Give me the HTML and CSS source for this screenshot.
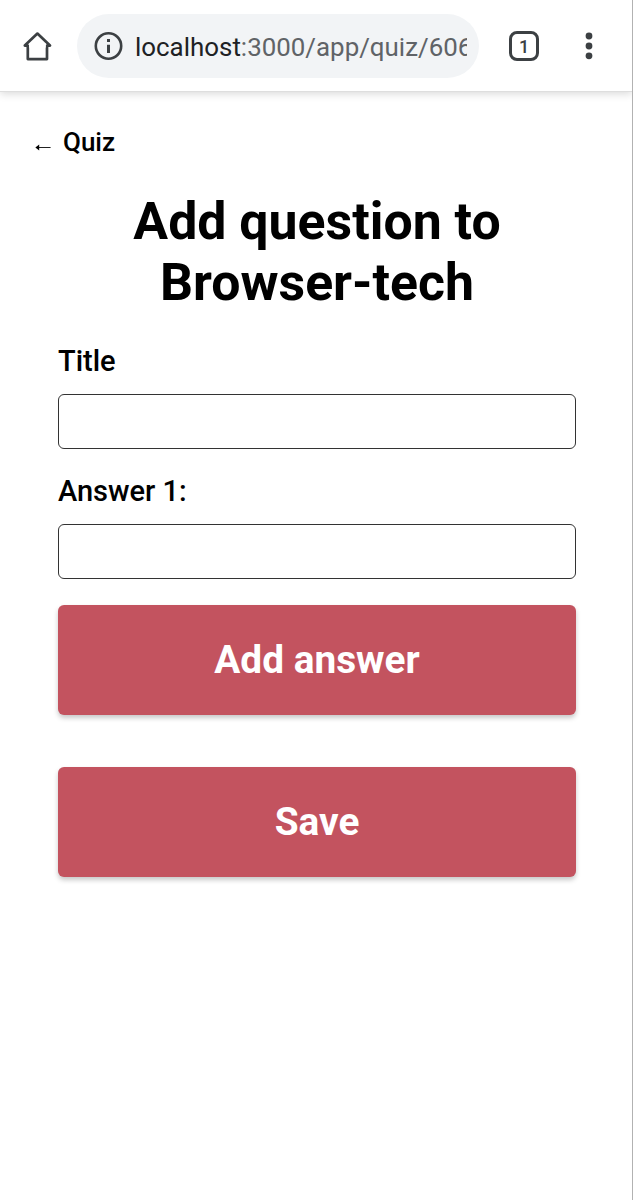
FILE: index.html
```html
<!DOCTYPE html>
<html lang="en">
<head>
<meta charset="utf-8">
<title>Add question</title>
<link rel="stylesheet" href="styles.css">
</head>
<body>
<div class="screen">
  <header class="toolbar">
    <svg class="home" width="32" height="32" viewBox="0 0 32 32"><path d="M5.8 15.6H2.8L15.4 3.6l12.6 12H25v13.5H5.8z" fill="none" stroke="#3c4043" stroke-width="2.7" stroke-linejoin="round"/><path d="M7.1 13.6h16.6v4H7.1z" fill="#fff"/></svg>
    <div class="address">
      <svg class="info" width="30" height="30" viewBox="0 0 30 30"><circle cx="15.5" cy="15" r="12.7" fill="none" stroke="#3c4043" stroke-width="2.6"/><path d="M14 8h3v3h-3zM14 13.7h3v8.3h-3z" fill="#3c4043"/></svg>
      <div class="url"><span class="host">localhost</span>:3000/app/quiz/606</div>
    </div>
    <div class="tabs">1</div>
    <svg class="menu" width="8" height="28" viewBox="0 0 8 28"><g fill="#3c4043"><circle cx="4" cy="4" r="3.4"/><circle cx="4" cy="14" r="3.4"/><circle cx="4" cy="23.8" r="3.4"/></g></svg>
  </header>
  <main class="page">
    <a class="back"><svg class="arrow" width="16" height="8" viewBox="0 0 16 8"><path d="M2 4.5h13.6" stroke="#222" stroke-width="1"/><path d="M.4 4.5 4.2 1.5v6z"/></svg><span>Quiz</span></a>
    <h1 class="heading">Add question to<br>Browser-tech</h1>
    <form class="form">
      <label class="label" for="title">Title</label>
      <input class="field" id="title" type="text">
      <label class="label" for="answer">Answer 1:</label>
      <input class="field" id="answer" type="text">
      <button class="button" type="button">Add answer</button>
      <button class="button save" type="button">Save</button>
    </form>
  </main>
</div>
</body>
</html>
```
FILE: styles.css
```css
* { box-sizing: border-box; }
body { margin: 0; background: #fff; font-family: Roboto, sans-serif; color: #000; }
.screen { height: 1200px; border-right: 1px solid #b2b2b2; overflow: hidden; }
.toolbar { display: flex; align-items: center; height: 92px; border-bottom: 1px solid #dedede; box-shadow: 0 2px 8px rgba(0,0,0,.15); }
.toolbar svg { flex: none; }
.home { margin-left: 22px; }
.address { display: flex; align-items: center; width: 402px; height: 64px; margin-left: 23px; padding: 0 12px 0 16px; border-radius: 32px; background: #f2f4f6; }
.url { flex: 1; margin-left: 12px; padding-top: 2px; overflow: hidden; white-space: nowrap; font-size: 25.9px; line-height: 34px; color: #606367; }
.host { color: #202124; }
.tabs { width: 30px; height: 30px; margin-left: 30px; border: 2.8px solid #3c4043; border-width: 3px; border-radius: 8px; font-size: 18px; font-weight: 500; line-height: 25px; text-align: center; color: #3c4043; }
.menu { margin-left: 46px; }
.page { padding: 33px 56px 0 58px; }
.back { display: flex; align-items: center; height: 34px; margin-left: -23px; font-size: 26px; font-weight: 500; line-height: 34px; }
.arrow { margin: 9px 12px 0 0; }
.heading { margin: 32px 0 0; font-size: 51.8px; font-weight: 700; line-height: 61px; text-align: center; }
.form { display: flex; flex-direction: column; }
.label { margin-top: 30px; height: 36px; font-size: 29px; font-weight: 500; line-height: 37px; }
.field { width: 518px; height: 55px; margin: 15px 0 0; padding: 0 12px; border: 1.3px solid #333; border-radius: 6px; background: #fff; font: 28px Roboto, sans-serif; }
.field + .label { margin-top: 24px; }
.button { height: 110px; margin: 26px 0 0; padding: 0; border: 0; border-radius: 6px; background: #c3535f; box-shadow: 0 3px 5px rgba(0,0,0,.22); color: #fff; font: 700 38.8px/110px Roboto, sans-serif; }
.save { margin-top: 52px; }
```
